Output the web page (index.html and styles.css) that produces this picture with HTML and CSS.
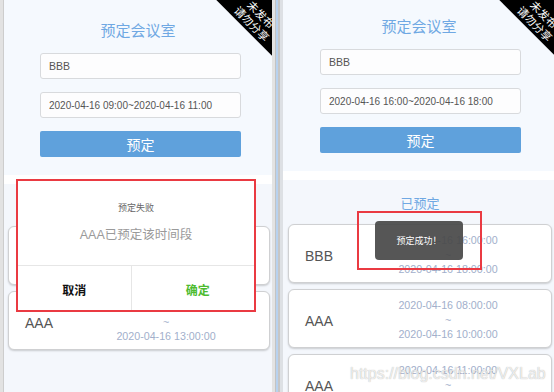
FILE: index.html
```html
<!DOCTYPE html>
<html lang="zh-CN">
<head>
  <meta charset="UTF-8" />
  <title>预定会议室</title>
  <link rel="stylesheet" href="styles.css">
</head>
<body>
  <div class="page">
    <div class="gutter"></div>

    <!-- failed booking -->
    <section class="phone phone-left">
      <div class="ribbon"><span>未发布</span><span>请勿分享</span></div>
      <div class="booking">
        <h1 class="title">预定会议室</h1>
        <input class="field field-name" type="text" value="BBB" readonly>
        <input class="field" type="text" value="2020-04-16 09:00~2020-04-16 11:00" readonly>
        <button class="submit">预定</button>
      </div>
      <div class="band"></div>
      <div class="reserved">
        <h2 class="subtitle">已预定</h2>
        <div class="card">
          <div class="card-name">AAA</div>
          <div class="card-time">2020-04-16 08:00:00<br>~<br>2020-04-16 10:00:00</div>
        </div>
        <div class="card">
          <div class="card-name">AAA</div>
          <div class="card-time">2020-04-16 11:00:00<br>~<br>2020-04-16 13:00:00</div>
        </div>
      </div>

      <div class="dialog">
        <div class="dialog-body">
          <div class="dialog-title">预定失败</div>
          <div class="dialog-msg">AAA已预定该时间段</div>
        </div>
        <div class="dialog-actions">
          <div class="dialog-btn cancel">取消</div>
          <div class="dialog-btn ok">确定</div>
        </div>
      </div>
    </section>

    <div class="divider">
      <span class="d1"></span><span class="d2"></span><span class="d3"></span><span class="d4"></span>
    </div>

    <!-- successful booking -->
    <section class="phone phone-right">
      <div class="ribbon"><span>未发布</span><span>请勿分享</span></div>
      <div class="booking">
        <h1 class="title">预定会议室</h1>
        <input class="field field-name" type="text" value="BBB" readonly>
        <input class="field" type="text" value="2020-04-16 16:00~2020-04-16 18:00" readonly>
        <button class="submit">预定</button>
      </div>
      <div class="band"></div>
      <div class="reserved">
        <h2 class="subtitle">已预定</h2>
        <div class="card">
          <div class="card-name">BBB</div>
          <div class="card-time">2020-04-16 16:00:00<br>~<br>2020-04-16 18:00:00</div>
        </div>
        <div class="card">
          <div class="card-name">AAA</div>
          <div class="card-time">2020-04-16 08:00:00<br>~<br>2020-04-16 10:00:00</div>
        </div>
        <div class="card">
          <div class="card-name">AAA</div>
          <div class="card-time">2020-04-16 11:00:00<br>~<br>2020-04-16 13:00:00</div>
        </div>
      </div>

      <div class="toast">预定成功！</div>
      <div class="mark"></div>
    </section>

    <div class="watermark">https://blog.csdn.net/VXLab</div>
  </div>
</body>
</html>
```

FILE: styles.css
```css
html, body {
  margin: 0;
  padding: 0;
  height: 100%;
}

*, *::before, *::after {
  box-sizing: border-box;
}

body {
  font-family: "Liberation Sans", "Noto Sans CJK SC", sans-serif;
  background: #e6e6e6;
  overflow: hidden;
}

.page {
  position: relative;
  display: flex;
  width: 554px;
  height: 392px;
  overflow: hidden;
}

.gutter {
  width: 4px;
  flex: none;
  background: #e2e2e2;
  border-right: 1px solid #cdcdcd;
}

.phone {
  position: relative;
  flex: none;
  overflow: hidden;
  background: #f4f7fc;
}

.phone-left {
  width: 268px;
}

.phone-right {
  width: 272px;
}

.divider {
  display: flex;
  width: 11px;
  flex: none;
}

.divider span { display: block; height: 100%; }
.divider .d1 { width: 3px; background: #e3e3e3; }
.divider .d2 { width: 1px; background: #c3c3c3; }
.divider .d3 { width: 2px; background: #b8d2ef; }
.divider .d4 { width: 5px; background: #dde0e4; border-left: 2px solid #c6c6c6; }

/* corner ribbon */
.ribbon {
  position: absolute;
  top: -7px;
  right: -58px;
  width: 140px;
  height: 42px;
  background: #000;
  color: #fff;
  transform: rotate(45deg);
  display: flex;
  flex-direction: column;
  justify-content: flex-end;
  align-items: center;
  font-size: 11px;
  line-height: 13px;
  padding: 0 0 1px 2px;
  z-index: 3;
}

/* booking form */
.booking {
  background: #f5f9fe;
  padding: 20px 0 18px;
}

.phone-right .booking {
  margin-top: -4px;
}

.title {
  margin: 0 0 11px;
  font-size: 15px;
  font-weight: normal;
  line-height: 22px;
  text-align: center;
  color: #6fa8e3;
}

.field {
  display: block;
  width: 201px;
  height: 26px;
  margin: 0 0 13px 36px;
  padding: 0 8px;
  border: 1px solid #d8dadd;
  border-radius: 3px;
  background: #fdfdfe;
  font-family: inherit;
  font-size: 10px;
  color: #555;
  outline: none;
}

.field-name {
  font-size: 10.5px;
}

.phone-right .field {
  margin-left: 37px;
}

.submit {
  display: block;
  width: 201px;
  height: 26px;
  margin: 2px 0 0 36px;
  border: none;
  border-radius: 2px;
  background: #5fa1dc;
  color: #fff;
  font-family: inherit;
  font-size: 14px;
}

.phone-right .submit {
  margin-left: 37px;
}

.band {
  height: 9px;
  background: #fff;
}

/* reserved list */
.reserved {
  padding: 10px 2px 0 4px;
}

.phone-right .reserved {
  padding: 13px 3px 0 5px;
}

.subtitle {
  margin: 0 0 10px;
  font-size: 13px;
  font-weight: normal;
  line-height: 22px;
  text-align: center;
  color: #6fa8e3;
}

.phone-right .subtitle {
  margin-bottom: 9px;
}

.card {
  display: flex;
  align-items: center;
  height: 59px;
  margin-bottom: 6px;
  padding: 0 23px 0 16px;
  background: #fff;
  border: 1px solid #cfd0d2;
  border-radius: 6px;
  box-shadow: 0 1px 2px rgba(0, 0, 0, 0.18);
}

.card-name {
  flex: 1;
  font-size: 14px;
  color: #555;
  padding-top: 5px;
}

.card-time {
  width: 160px;
  text-align: center;
  font-size: 10.7px;
  line-height: 14.5px;
  padding-top: 3px;
  color: #a2afcb;
}

/* failure dialog */
.dialog {
  position: absolute;
  left: 12px;
  top: 179px;
  width: 240px;
  height: 133px;
  background: #fff;
  border: 2px solid #ea3a42;
  z-index: 4;
}

.dialog-body {
  height: 84px;
  padding-top: 21px;
  text-align: center;
}

.dialog-title {
  font-size: 9px;
  line-height: 12px;
  color: #666;
}

.dialog-msg {
  margin-top: 12px;
  font-size: 12.5px;
  line-height: 18px;
  color: #9a9a9a;
}

.dialog-actions {
  display: flex;
  height: 45px;
  border-top: 1px solid #e6e6e6;
}

.dialog-btn {
  flex: 1;
  display: flex;
  align-items: center;
  justify-content: center;
  font-size: 12px;
  font-weight: bold;
  padding-top: 3px;
}

.dialog-btn.cancel {
  color: #111;
  border-right: 1px solid #e6e6e6;
}

.dialog-btn.ok {
  color: #4dbb2f;
  padding-left: 10px;
}

/* success toast */
.toast {
  position: absolute;
  left: 92px;
  top: 221px;
  width: 88px;
  height: 39px;
  display: flex;
  align-items: center;
  justify-content: center;
  background: rgba(72, 72, 72, 0.92);
  border-radius: 4px;
  color: #fff;
  font-size: 9px;
  z-index: 4;
}

.mark {
  position: absolute;
  left: 74px;
  top: 211px;
  width: 125px;
  height: 59px;
  border: 2px solid #ea3a42;
  z-index: 5;
}

.watermark {
  position: absolute;
  left: 350px;
  top: 364px;
  font-size: 16px;
  line-height: 20px;
  color: rgba(255, 255, 255, 0.75);
  text-shadow: 0 0 1px rgba(0, 0, 0, 0.35);
  z-index: 6;
}
```
